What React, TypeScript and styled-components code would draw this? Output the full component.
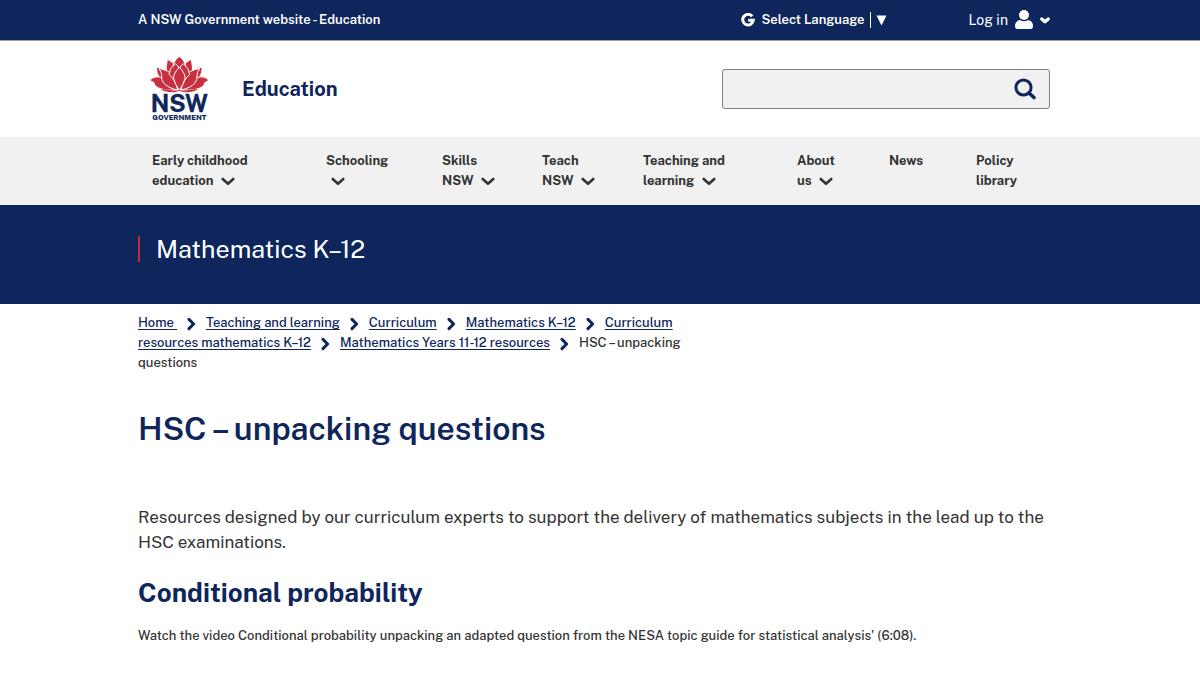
import React from 'react';
import styled, { createGlobalStyle } from 'styled-components';

const navy = '#0e265c';
const ink = '#333333';
const pale = '#f1f1f1';

const GlobalStyle = createGlobalStyle`
  *, *::before, *::after { box-sizing: border-box; }
  body {
    margin: 0;
    background: #ffffff;
    color: ${ink};
    font-family: 'Public Sans', Inter, 'Liberation Sans', sans-serif;
    font-size: 14px;
    line-height: 20px;
  }
  h1, h2, p, ul, ol { margin: 0; padding: 0; }
  ul, ol { list-style: none; }
  button { font: inherit; color: inherit; background: none; border: 0; padding: 0; cursor: pointer; }
`;

const Container = styled.div`
  max-width: 924px;
  margin: 0 auto;
  padding-right: 12px;
`;

const TopBar = styled.div`
  background: ${navy};
  color: #ffffff;
  border-bottom: 1px solid #9a9da3;
`;

const TopRow = styled(Container)`
  display: flex;
  align-items: center;
  height: 40px;
`;

const SiteNote = styled.span`
  flex: 1;
  font-size: 13px;
  font-weight: 600;
`;

const LanguageButton = styled.button`
  display: flex;
  align-items: center;
  gap: 5px;
  margin-right: 82px;
  font-size: 13px;
  font-weight: 600;
`;

const LanguageLabel = styled.span`
  border-right: 1px solid #ffffff;
  line-height: 16px;
  padding: 0 5px 0 1px;
`;

const LoginButton = styled.button`
  display: flex;
  align-items: center;
  gap: 7px;
  font-weight: 400;
`;

const Masthead = styled(Container)`
  display: flex;
  align-items: center;
  height: 96px;
`;

const Brand = styled.a`
  display: flex;
  align-items: center;
  gap: 33px;
  margin-left: 12px;
  flex: 1;
  color: ${navy};
  text-decoration: none;
  font-size: 20px;
  font-weight: 700;
`;

const SearchForm = styled.form`
  display: flex;
  width: 36%;
  height: 40px;
  background: ${pale};
  border: 1px solid #808080;
  border-radius: 3px;
`;

const SearchInput = styled.input`
  flex: 1;
  min-width: 0;
  border: 0;
  background: none;
  padding: 0 12px;
  font: inherit;
`;

const SearchButton = styled.button`
  display: flex;
  align-items: center;
  padding: 0 12px;
  color: ${navy};
`;

const NavBar = styled.nav`
  background: ${pale};
`;

const NavList = styled.ul`
  display: grid;
  grid-template-columns: 174fr 116fr 100fr 101fr 154fr 92fr 87fr 74fr;
  max-width: 924px;
  margin: 0 auto;
  padding: 14px 12px 14px 14px;
`;

const NavItem = styled.button<{ $width: number }>`
  display: block;
  width: ${({ $width }) => $width}px;
  font-size: 13px;
  font-weight: 700;
  line-height: 20px;
  text-align: left;
`;

const NavArrow = styled.svg`
  margin-left: 5px;
  vertical-align: -1px;
`;

const Banner = styled.div`
  background: ${navy};
  color: #ffffff;
  padding: 28px 0 39px;
`;

const BannerTitle = styled.div`
  display: flex;
  align-items: center;
  gap: 16px;
  font-size: 25px;
  font-weight: 400;
  line-height: 32px;

  &::before {
    content: '';
    width: 2px;
    height: 26px;
    background: #c8283c;
  }
`;

const Crumbs = styled.ol`
  max-width: 564px;
  padding-top: 9px;
  font-size: 13px;
  font-weight: 500;
  line-height: 20px;
`;

const Crumb = styled.li`
  display: inline;
`;

const CrumbLink = styled.a`
  color: ${navy};
  text-underline-offset: 2px;
`;

const CrumbArrow = styled.svg`
  margin: 0 10px;
  vertical-align: -4px;
`;

const PageTitle = styled.h1`
  margin-top: 36px;
  color: ${navy};
  font-size: 32px;
  font-weight: 600;
  line-height: 40px;
`;

const Lead = styled.p`
  margin-top: 56px;
  font-size: 17px;
  line-height: 25px;
`;

const SectionTitle = styled.h2`
  margin-top: 22px;
  color: ${navy};
  font-size: 26px;
  font-weight: 700;
  line-height: 32px;
`;

const Body = styled.p`
  margin-top: 17px;
  font-size: 13px;
  font-weight: 500;
`;

const Logo = () => (
  <svg width="59" height="64" viewBox="60 36 177 192" role="img" aria-label="NSW Government">
    <g fill="#c8303f" stroke="#ffffff" strokeWidth="3" strokeLinejoin="round">
      <path d="M79 66 Q98 68 108 80 L110 106 L88 98 Q79 84 79 66Z" />
      <path d="M217 66 Q198 68 188 80 L186 106 L208 98 Q217 84 217 66Z" />
      <path d="M112 43 Q129 50 137 64 L126 98 L110 90 Q106 66 112 43Z" />
      <path d="M184 43 Q167 50 159 64 L170 98 L186 90 Q190 66 184 43Z" />
      <path d="M148 34 Q162 43 167 60 L156 86 H140 L129 60 Q134 43 148 34Z" />
      <path d="M59 106 Q74 90 96 98 Q126 108 141 135 Q92 138 75 122 Q76 112 59 106Z" />
      <path d="M237 106 Q222 90 200 98 Q170 108 155 135 Q204 138 221 122 Q220 112 237 106Z" />
      <path d="M87 71 Q117 74 131 95 Q141 112 143 135 Q114 129 101 114 Q93 103 95 91 Q95 81 87 71Z" />
      <path d="M209 71 Q179 74 165 95 Q155 112 153 135 Q182 129 195 114 Q203 103 201 91 Q201 81 209 71Z" />
      <path d="M136 56 Q118 70 117 88 Q134 102 144 135 H152 Q162 102 179 88 Q178 70 160 56 Q151 62 148 72 Q145 62 136 56Z" />
      <path d="M148 67 Q129 86 131 101 Q136 119 148 136 Q160 119 165 101 Q167 86 148 67Z" />
    </g>
    <path d="M91 133 Q112 132 121 135 Q135 139 148 134 Q161 139 175 135 Q184 132 205 133 Q195 139 181 141 Q161 143 148 137 Q135 143 115 141 Q101 139 91 133Z" fill="#c8303f" />
    <text x="148" y="200" textAnchor="middle" fill={navy} stroke={navy} strokeWidth="1" fontSize="71" fontWeight="700">NSW</text>
    <text x="148" y="224" textAnchor="middle" fill={navy} fontSize="22" fontWeight="800">GOVERNMENT</text>
  </svg>
);

const navItems = [
  { label: 'Early childhood education', width: 112, arrow: true },
  { label: 'Schooling', width: 70, arrow: true },
  { label: 'Skills NSW', width: 60, arrow: true },
  { label: 'Teach NSW', width: 60, arrow: true },
  { label: 'Teaching and learning', width: 96, arrow: true },
  { label: 'About us', width: 46, arrow: true },
  { label: 'News', width: 46, arrow: false },
  { label: 'Policy library', width: 60, arrow: false },
];

const crumbs = [
  'Home ',
  'Teaching and learning',
  'Curriculum',
  'Mathematics K–12',
  'Curriculum resources mathematics K–12',
  'Mathematics Years 11-12 resources',
];

export default function App() {
  return (
    <>
      <GlobalStyle />
      <TopBar>
        <TopRow>
          <SiteNote>A NSW Government website - Education</SiteNote>
          <LanguageButton type="button">
            <svg width="14" height="14" viewBox="0 0 14 14" fill="none" stroke="#ffffff" strokeWidth="3" aria-hidden="true">
              <path d="M11.2 3.4A5.3 5.3 0 1 0 12.3 7.2H7.2" />
            </svg>
            <LanguageLabel>Select Language</LanguageLabel>
            <svg width="11" height="11" viewBox="0 0 11 11" fill="#ffffff" aria-hidden="true">
              <path d="M0.5 0.5H10.5L5.5 10.5Z" />
            </svg>
          </LanguageButton>
          <LoginButton type="button">
            Log in
            <svg width="18" height="20" viewBox="0 0 18 20" fill="#ffffff" aria-hidden="true">
              <circle cx="9" cy="5" r="5" />
              <path d="M5 10Q9 12.6 13 10Q18 11 18 16Q18 19 15.5 19H2.5Q0 19 0 16Q0 11 5 10Z" />
            </svg>
            <svg width="10" height="7" viewBox="0 0 10 7" fill="none" stroke="#ffffff" strokeWidth="3.4" strokeLinecap="round" strokeLinejoin="round" aria-hidden="true">
              <path d="M1.8 2L5 4.7L8.2 2" />
            </svg>
          </LoginButton>
        </TopRow>
      </TopBar>
      <Masthead as="header">
        <Brand href="#">
          <Logo />
          Education
        </Brand>
        <SearchForm role="search">
          <SearchInput type="search" aria-label="Search" />
          <SearchButton type="submit" aria-label="Search">
            <svg width="24" height="24" viewBox="0 0 24 24" fill="none" stroke="currentColor" strokeWidth="3" strokeLinecap="round" aria-hidden="true">
              <circle cx="10.5" cy="10.5" r="7.6" />
              <path d="M16 16L21 20.5" strokeWidth="3.6" />
            </svg>
          </SearchButton>
        </SearchForm>
      </Masthead>
      <NavBar aria-label="Main">
        <NavList>
          {navItems.map((item) => (
            <li key={item.label}>
              <NavItem type="button" $width={item.width}>
                {item.label}
                {item.arrow && ' '}
                {item.arrow && (
                  <NavArrow width="14" height="9" viewBox="0 0 14 9" fill="none" stroke={ink} strokeWidth="2.6" strokeLinecap="round" strokeLinejoin="round" aria-hidden="true">
                    <path d="M1.7 2L7 6.8L12.3 2" />
                  </NavArrow>
                )}
              </NavItem>
            </li>
          ))}
        </NavList>
      </NavBar>
      <Banner>
        <Container>
          <BannerTitle>Mathematics K–12</BannerTitle>
        </Container>
      </Banner>
      <Container as="main">
        <nav aria-label="Breadcrumb">
          <Crumbs>
            {crumbs.map((name) => (
              <Crumb key={name}>
                <CrumbLink href="#">{name}</CrumbLink>
                <CrumbArrow width="9" height="14" viewBox="0 0 9 14" fill="none" stroke={navy} strokeWidth="3" strokeLinecap="round" strokeLinejoin="round" aria-hidden="true">
                  <path d="M2 2.4L6.6 7L2 11.6" />
                </CrumbArrow>
              </Crumb>
            ))}
            <Crumb aria-current="page">HSC – unpacking questions</Crumb>
          </Crumbs>
        </nav>
        <PageTitle>HSC – unpacking questions</PageTitle>
        <Lead>
          Resources designed by our curriculum experts to support the delivery of mathematics subjects in the lead up to the
          HSC examinations.
        </Lead>
        <SectionTitle>Conditional probability</SectionTitle>
        <Body>
          Watch the video Conditional probability unpacking an adapted question from the NESA topic guide for statistical
          analysis' (6:08).
        </Body>
      </Container>
    </>
  );
}
